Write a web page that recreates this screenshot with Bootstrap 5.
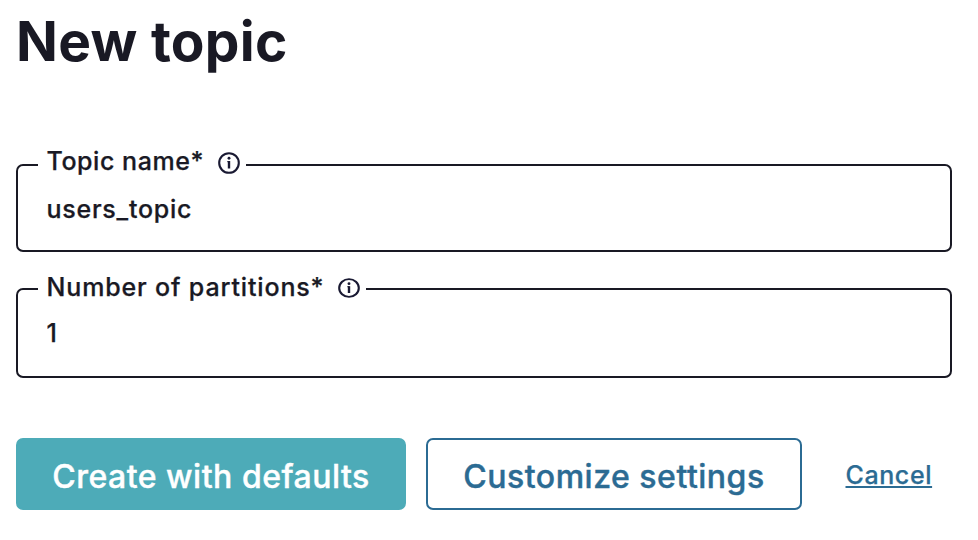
<!DOCTYPE html>
<html lang="en">
<head>
<meta charset="utf-8">
<meta name="viewport" content="width=device-width, initial-scale=1">
<title>New topic</title>
<link href="https://cdn.jsdelivr.net/npm/bootstrap@5.3.0/dist/css/bootstrap.min.css" rel="stylesheet">
<style>
body{font-family:Inter,"Liberation Sans",sans-serif;color:#191924;background:#fff;overflow:hidden}
.topic-page{padding:8px 26px 0 16px}
.page-title{font-size:55px;line-height:67px;font-weight:700;letter-spacing:.3px;height:68px}
.field-box{border:2px solid #191924;border-radius:7px;height:88px;padding:0 28px}
.field-first{margin-top:88px}
.field-second{margin-top:36px;height:90px}
.field-label{font-size:25px;font-weight:500;letter-spacing:.85px;line-height:30px;height:30px;margin:-18px 0 0 -8px;padding:0 6px 0 8.5px;background:#fff;width:208px;-webkit-text-stroke:.25px}
.field-first .field-label{letter-spacing:.55px;margin-top:-20px;line-height:31px}
.field-first .field-label svg{margin-top:3px}
.field-second .field-label{width:328px}
.field-second .field-label svg{margin-top:1px}
.field-value{font-size:25px;font-weight:500;letter-spacing:.75px;line-height:30px;height:30px;padding:0 0 0 .5px;margin-top:18px;border:0;color:#191924;background:transparent;box-shadow:none!important;-webkit-text-stroke:.25px}
.field-second .field-value{margin-top:16px}
.actions{margin-top:60px}
.action-btn{height:72px;border-radius:7px;border-width:2px;font-size:32px;font-weight:500;letter-spacing:.5px;padding:6px 0 0;line-height:1;-webkit-text-stroke:.4px}
.create-btn{width:390px;--bs-btn-color:#fff;--bs-btn-bg:#4dabb8;--bs-btn-border-color:#4dabb8}
.customize-btn{width:376px;margin-left:20px;--bs-btn-color:#2b6b93;--bs-btn-border-color:#2b6b93}
.cancel-link{color:#2b6b93;font-size:25px;font-weight:500;letter-spacing:.6px;margin-left:43.5px;margin-top:1px;line-height:30px;-webkit-text-stroke:.25px;text-decoration-thickness:2px;text-underline-offset:2px;text-decoration-skip-ink:none}
</style>
<script src="https://cdn.jsdelivr.net/npm/bootstrap@5.3.0/dist/js/bootstrap.bundle.min.js"></script>
</head>
<body>
<main class="topic-page">
<h1 class="page-title mb-0">New topic</h1>
<form>
<div class="field-box field-first">
<label class="field-label d-flex align-items-center justify-content-between" for="name"><span>Topic name*</span><svg width="22" height="22" viewBox="0 0 22 22" fill="none" stroke="#191932" stroke-width="2.1"><circle cx="11" cy="11" r="9.8"/><path d="M11 9v7.5" stroke-width="2.4"/><path d="M9.4 9.6h2" stroke-width="1.2"/><circle cx="11" cy="6.2" r="1.45" fill="#191932" stroke="none"/></svg></label>
<input class="form-control field-value" id="name" value="users_topic">
</div>
<div class="field-box field-second">
<label class="field-label d-flex align-items-center justify-content-between" for="parts"><span>Number of partitions*</span><svg width="22" height="20" viewBox="0 0 22 22" preserveAspectRatio="none" fill="none" stroke="#191932" stroke-width="2.1"><circle cx="11" cy="11" r="9.8"/><path d="M11 9v7.5" stroke-width="2.4"/><path d="M9.4 9.6h2" stroke-width="1.2"/><circle cx="11" cy="6.2" r="1.45" fill="#191932" stroke="none"/></svg></label>
<input class="form-control field-value" id="parts" value="1">
</div>
<div class="actions d-flex align-items-center">
<button type="button" class="btn action-btn create-btn">Create with defaults</button>
<button type="button" class="btn action-btn customize-btn">Customize settings</button>
<a class="cancel-link" href="#">Cancel</a>
</div>
</form>
</main>
</body>
</html>
